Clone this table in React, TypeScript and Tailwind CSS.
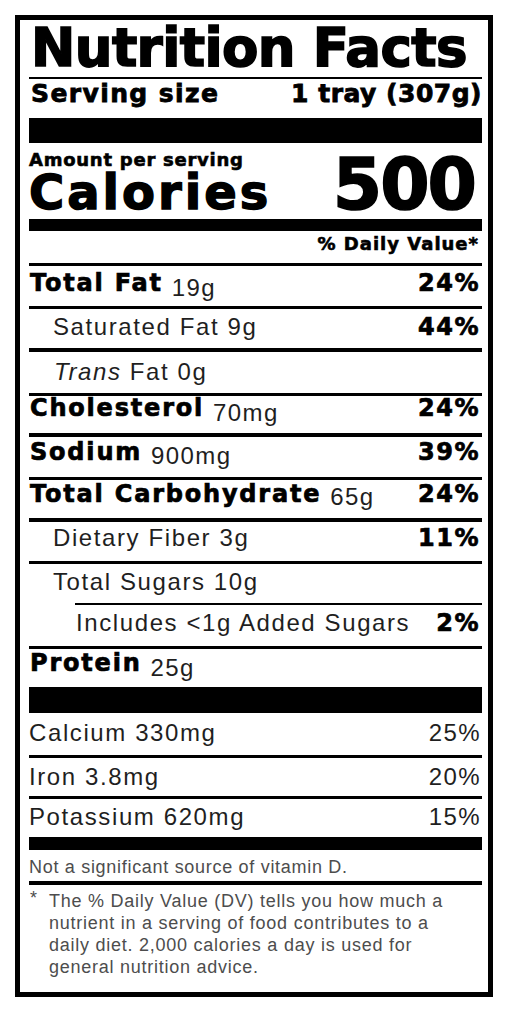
import React from 'react';

const heavy = "font-['DejaVu_Sans',sans-serif] font-bold text-black";
const regular = "font-['Liberation_Sans',Arial,sans-serif] text-[#1f1f1f]";

interface RowProps {
  h: string;
  pt: string;
  indent?: string;
  label: React.ReactNode;
  amount?: string;
  amountMt?: string;
  dv?: string;
  dvBold?: boolean;
}

// one line of the label: bold name + regular amount on the left, %DV on the right
const Row: React.FC<RowProps> = ({ h, pt, indent = '', label, amount, amountMt = '', dv, dvBold = true }) => (
  <div className={`flex items-start justify-between ${h} ${pt} ${indent}`}>
    <div className="flex items-start">
      {label}
      {amount && (
        <span className={`${regular} ml-[9px] text-[24px] leading-none tracking-[1.4px] ${amountMt}`}>{amount}</span>
      )}
    </div>
    {dv && (
      <span
        className={
          dvBold
            ? `${heavy} pr-[2px] text-[24px] leading-none tracking-[1.5px] [-webkit-text-stroke:0.7px_black]`
            : `${regular} pr-[1px] text-[24px] leading-none tracking-[1.4px]`
        }
      >
        {dv}
      </span>
    )}
  </div>
);

const Bold: React.FC<{ children: React.ReactNode }> = ({ children }) => (
  <span className={`${heavy} pl-[1px] text-[24px] leading-none tracking-[1.8px] [-webkit-text-stroke:0.7px_black]`}>
    {children}
  </span>
);

const Plain: React.FC<{ children: React.ReactNode }> = ({ children }) => (
  <span className={`${regular} text-[24px] leading-none tracking-[1.6px]`}>{children}</span>
);

export default function App() {
  return (
    <div className="min-h-screen bg-white pt-[15px] pl-[15px]">
      <div className="flex h-[982px] w-[478px] flex-col border-[5px] border-black pl-[9px] pr-[6px]">
        {/* title */}
        <div
          className={`${heavy} h-[57px] pt-[1px] pl-[2px] text-[53px] leading-none tracking-[-0.6px] [-webkit-text-stroke:1.6px_black]`}
        >
          Nutrition Facts
        </div>
        <div className="h-[2px] bg-black" />

        <div
          className={`${heavy} flex h-[39px] justify-between pt-[2px] text-[25px] leading-none [-webkit-text-stroke:0.8px_black]`}
        >
          <span className="pl-[2px] tracking-[1.4px]">Serving size</span>
          <span className="tracking-[0.5px]">1 tray (307g)</span>
        </div>
        <div className="h-[25px] bg-black" />

        {/* calories */}
        <div className={`${heavy} flex h-[76px] justify-between`}>
          <div className="pt-[9px]">
            <div className="text-[18px] leading-[16px] tracking-[0.75px] [-webkit-text-stroke:0.6px_black]">
              Amount per serving
            </div>
            <div className="mt-[4px] text-[48px] leading-[40px] tracking-[3px] [-webkit-text-stroke:1.4px_black]">
              Calories
            </div>
          </div>
          <div className="pt-[6px] pr-[7px] text-[71px] leading-none tracking-[-2px] [-webkit-text-stroke:1.6px_black]">
            500
          </div>
        </div>
        <div className="h-[12px] bg-black" />

        <div
          className={`${heavy} flex h-[32px] justify-end pt-[4px] pr-[3px] text-[18px] leading-none tracking-[1px] [-webkit-text-stroke:0.6px_black]`}
        >
          % Daily Value*
        </div>
        <div className="h-[3px] bg-black" />

        <Row h="h-[40px]" pt="pt-[5px]" label={<Bold>Total Fat</Bold>} amount="19g" amountMt="mt-[5px]" dv="24%" />
        <div className="h-[3px] bg-black" />
        <Row h="h-[39px]" pt="pt-[6px]" indent="pl-[24px]" label={<Plain>Saturated Fat 9g</Plain>} dv="44%" />
        <div className="h-[4px] bg-black" />
        <Row
          h="h-[41px]"
          pt="pt-[8px]"
          indent="pl-[25px]"
          label={
            <Plain>
              <span className="italic">Trans</span> Fat 0g
            </Plain>
          }
        />
        <div className="h-[3px] bg-black" />
        <Row h="h-[37px]" pt="pt-[0px]" label={<Bold>Cholesterol</Bold>} amount="70mg" amountMt="mt-[5px]" dv="24%" />
        <div className="h-[4px] bg-black" />
        <Row h="h-[40px]" pt="pt-[3px]" label={<Bold>Sodium</Bold>} amount="900mg" amountMt="mt-[4px]" dv="39%" />
        <div className="h-[3px] bg-black" />
        <Row
          h="h-[38px]"
          pt="pt-[2px]"
          label={<Bold>Total Carbohydrate</Bold>}
          amount="65g"
          amountMt="mt-[3px]"
          dv="24%"
        />
        <div className="h-[4px] bg-black" />
        <Row h="h-[39px]" pt="pt-[4px]" indent="pl-[24px]" label={<Plain>Dietary Fiber 3g</Plain>} dv="11%" />
        <div className="h-[3px] bg-black" />
        <Row h="h-[39px]" pt="pt-[6px]" indent="pl-[24px]" label={<Plain>Total Sugars 10g</Plain>} />
        <div className="ml-[46px] h-[2px] bg-black" />
        <Row h="h-[41px]" pt="pt-[6px]" indent="pl-[47px]" label={<Plain>Includes &lt;1g Added Sugars</Plain>} dv="2%" />
        <div className="h-[3px] bg-black" />
        <Row h="h-[38px]" pt="pt-[2px]" label={<Bold>Protein</Bold>} amount="25g" amountMt="mt-[5px]" />
        <div className="h-[26px] bg-black" />

        <Row h="h-[42px]" pt="pt-[8px]" label={<Plain>Calcium 330mg</Plain>} dv="25%" dvBold={false} />
        <div className="h-[3px] bg-black" />
        <Row h="h-[38px]" pt="pt-[7px]" label={<Plain>Iron 3.8mg</Plain>} dv="20%" dvBold={false} />
        <div className="h-[3px] bg-black" />
        <Row h="h-[38px]" pt="pt-[6px]" label={<Plain>Potassium 620mg</Plain>} dv="15%" dvBold={false} />
        <div className="h-[13px] bg-black" />

        <div className={`${regular} h-[31px] pt-[8px] text-[18px] leading-none tracking-[0.7px] text-[#4d4d4d]`}>
          Not a significant source of vitamin D.
        </div>
        <div className="h-[4px] bg-black" />

        {/* footnote */}
        <div className={`${regular} flex flex-1 pt-[5px] text-[18px] leading-[22px] tracking-[0.75px] text-[#4d4d4d]`}>
          <span className="w-[20px] shrink-0 pl-[1px] leading-[16px]">*</span>
          <p>
            The % Daily Value (DV) tells you how much a
            <br />
            nutrient in a serving of food contributes to a
            <br />
            daily diet. 2,000 calories a day is used for
            <br />
            general nutrition advice.
          </p>
        </div>
      </div>
    </div>
  );
}
